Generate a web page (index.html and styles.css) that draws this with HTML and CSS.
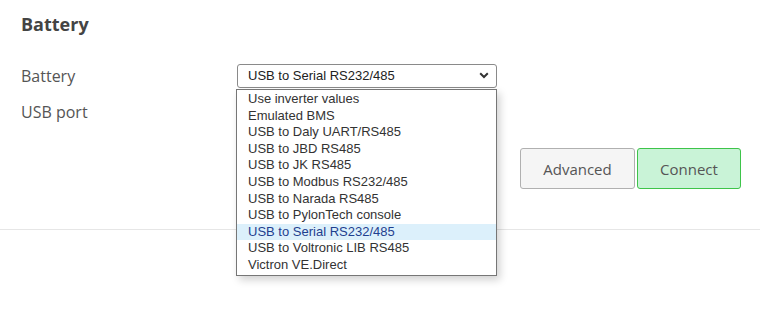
FILE: index.html
```html
<!DOCTYPE html>
<html>
<head>
<meta charset="utf-8">
<link rel="stylesheet" href="styles.css">
</head>
<body>
<div class="panel">
  <h2 class="title">Battery</h2>
  <div class="form">
    <div class="row">
      <label class="label">Battery</label>
      <div class="field">
        <div class="select">
          <span>USB to Serial RS232/485</span>
          <svg class="chev" width="10" height="7" viewBox="0 0 10 7"><path d="M1.2 1.3 L5 5 L8.8 1.3" fill="none" stroke="#333" stroke-width="2"/></svg>
        </div>
      </div>
    </div>
    <div class="row">
      <label class="label">USB port</label>
    </div>
  </div>
  <div class="actions">
    <button class="btn">Advanced</button>
    <button class="btn primary">Connect</button>
  </div>
</div>
<hr class="sep">
<ul class="dropdown">
  <li>Use inverter values</li>
  <li>Emulated BMS</li>
  <li>USB to Daly UART/RS485</li>
  <li>USB to JBD RS485</li>
  <li>USB to JK RS485</li>
  <li>USB to Modbus RS232/485</li>
  <li>USB to Narada RS485</li>
  <li>USB to PylonTech console</li>
  <li class="sel">USB to Serial RS232/485</li>
  <li>USB to Voltronic LIB RS485</li>
  <li>Victron VE.Direct</li>
</ul>
</body>
</html>
```
FILE: styles.css
```css
html, body {
  margin: 0;
  padding: 0;
  background: #fff;
}
body {
  font-family: "Open Sans", "Noto Sans", sans-serif;
  color: #555;
  position: relative;
  width: 760px;
  height: 321px;
  overflow: hidden;
}
.panel {
  padding: 10px 19px 0 21px;
}
.title {
  margin: 0;
  font-size: 18px;
  font-weight: 700;
  color: #444;
  line-height: 28px;
}
.form {
  margin-top: 25px;
  display: flex;
  flex-direction: column;
  gap: 11px;
}
.row {
  display: flex;
  align-items: center;
  height: 25px;
}
.label {
  width: 216px;
  font-size: 16px;
  color: #555;
}
.select {
  height: 22px;
  border: 1px solid #8a8a8a;
  border-radius: 3px;
  display: flex;
  align-items: center;
  justify-content: space-between;
  padding: 0 7px 0 10px;
  box-sizing: content-box;
  width: 241px;
  font-family: "Liberation Sans", Arial, sans-serif;
  font-size: 13px;
  color: #222;
  background: #fff;
}
.actions {
  display: flex;
  justify-content: flex-end;
  gap: 2px;
  margin-top: 24px;
}
.btn {
  box-sizing: border-box;
  height: 41px;
  margin: 0;
  border-radius: 3px;
  font-family: "Open Sans", "Noto Sans", sans-serif;
  font-size: 15px;
  color: #555;
  background: #f5f5f5;
  border: 1px solid #b0b0b0;
  width: 115px;
}
.btn.primary {
  background: #c9f3d7;
  border-color: #3ec44a;
  width: 104px;
}
.sep {
  margin: 40px 0 0 0;
  border: 0;
  border-top: 1px solid #e6e6e6;
}
.dropdown {
  position: absolute;
  left: 236px;
  top: 89px;
  width: 259px;
  margin: 0;
  padding: 1px 0 1px 0;
  list-style: none;
  border: 1px solid #767676;
  background: #fff;
  box-shadow: 3px 4px 8px rgba(0,0,0,0.18);
  font-family: "Liberation Sans", Arial, sans-serif;
  font-size: 13px;
  color: #333;
}
.dropdown li {
  line-height: 16.6px;
  height: 16.6px;
  padding-left: 11px;
}
.dropdown li.sel {
  background: #dcf0fb;
  color: #1f3f8f;
}
```
